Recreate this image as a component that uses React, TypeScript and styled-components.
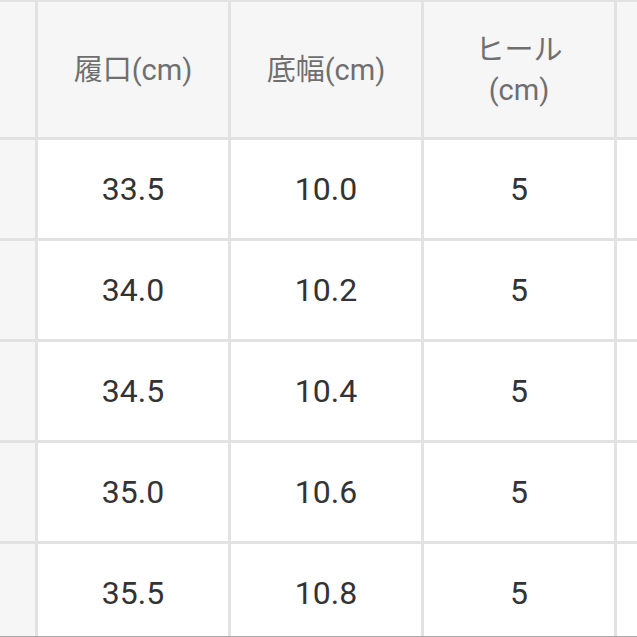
import styled, {createGlobalStyle} from "styled-components";

const GlobalStyle = createGlobalStyle`
  html, body {
    margin: 0;
    padding: 0;
    background: #ffffff;
  }
`;

const Frame = styled.div`
  width: 637px;
  height: 636px;
  overflow: hidden;
  border-bottom: 1px solid #a8a8a8;
`;

const Grid = styled.div`
  display: grid;
  grid-template-columns: 35px 190px 190px 190px 1fr;
  grid-template-rows: 135px repeat(5, 98px);
  gap: 3px;
  padding-top: 2px;
  background-color: #e2e2e2;
  font-family: Roboto, "Noto Sans CJK JP", sans-serif;
`;

const HeadCell = styled.div`
  display: flex;
  align-items: center;
  justify-content: center;
  text-align: center;
  white-space: pre-line;
  background-color: #f6f6f6;
  color: #6f6f6f;
  font-size: 29px;
  line-height: 40px;
`;

const Cell = styled.div<{ $side?: boolean }>`
  display: flex;
  align-items: center;
  justify-content: center;
  background-color: ${props => props.$side ? "#f6f6f6" : "#ffffff"};
  color: #333333;
  font-size: 32px;
`;

const headers = ["履口(cm)", "底幅(cm)", "ヒール\n(cm)"];

const rows = [
    ["33.5", "10.0", "5"],
    ["34.0", "10.2", "5"],
    ["34.5", "10.4", "5"],
    ["35.0", "10.6", "5"],
    ["35.5", "10.8", "5"],
];

function App() {
    return (
        <>
            <GlobalStyle/>
            <Frame>
                <Grid>
                    <HeadCell/>
                    {headers.map(h => <HeadCell key={h}>{h}</HeadCell>)}
                    <HeadCell/>
                    {rows.map((row, i) => (
                        <>
                            <Cell key={"s" + i} $side/>
                            {row.map((v, j) => <Cell key={i + "-" + j}>{v}</Cell>)}
                            <Cell key={"e" + i}/>
                        </>
                    ))}
                </Grid>
            </Frame>
        </>
    );
}

export default App;
